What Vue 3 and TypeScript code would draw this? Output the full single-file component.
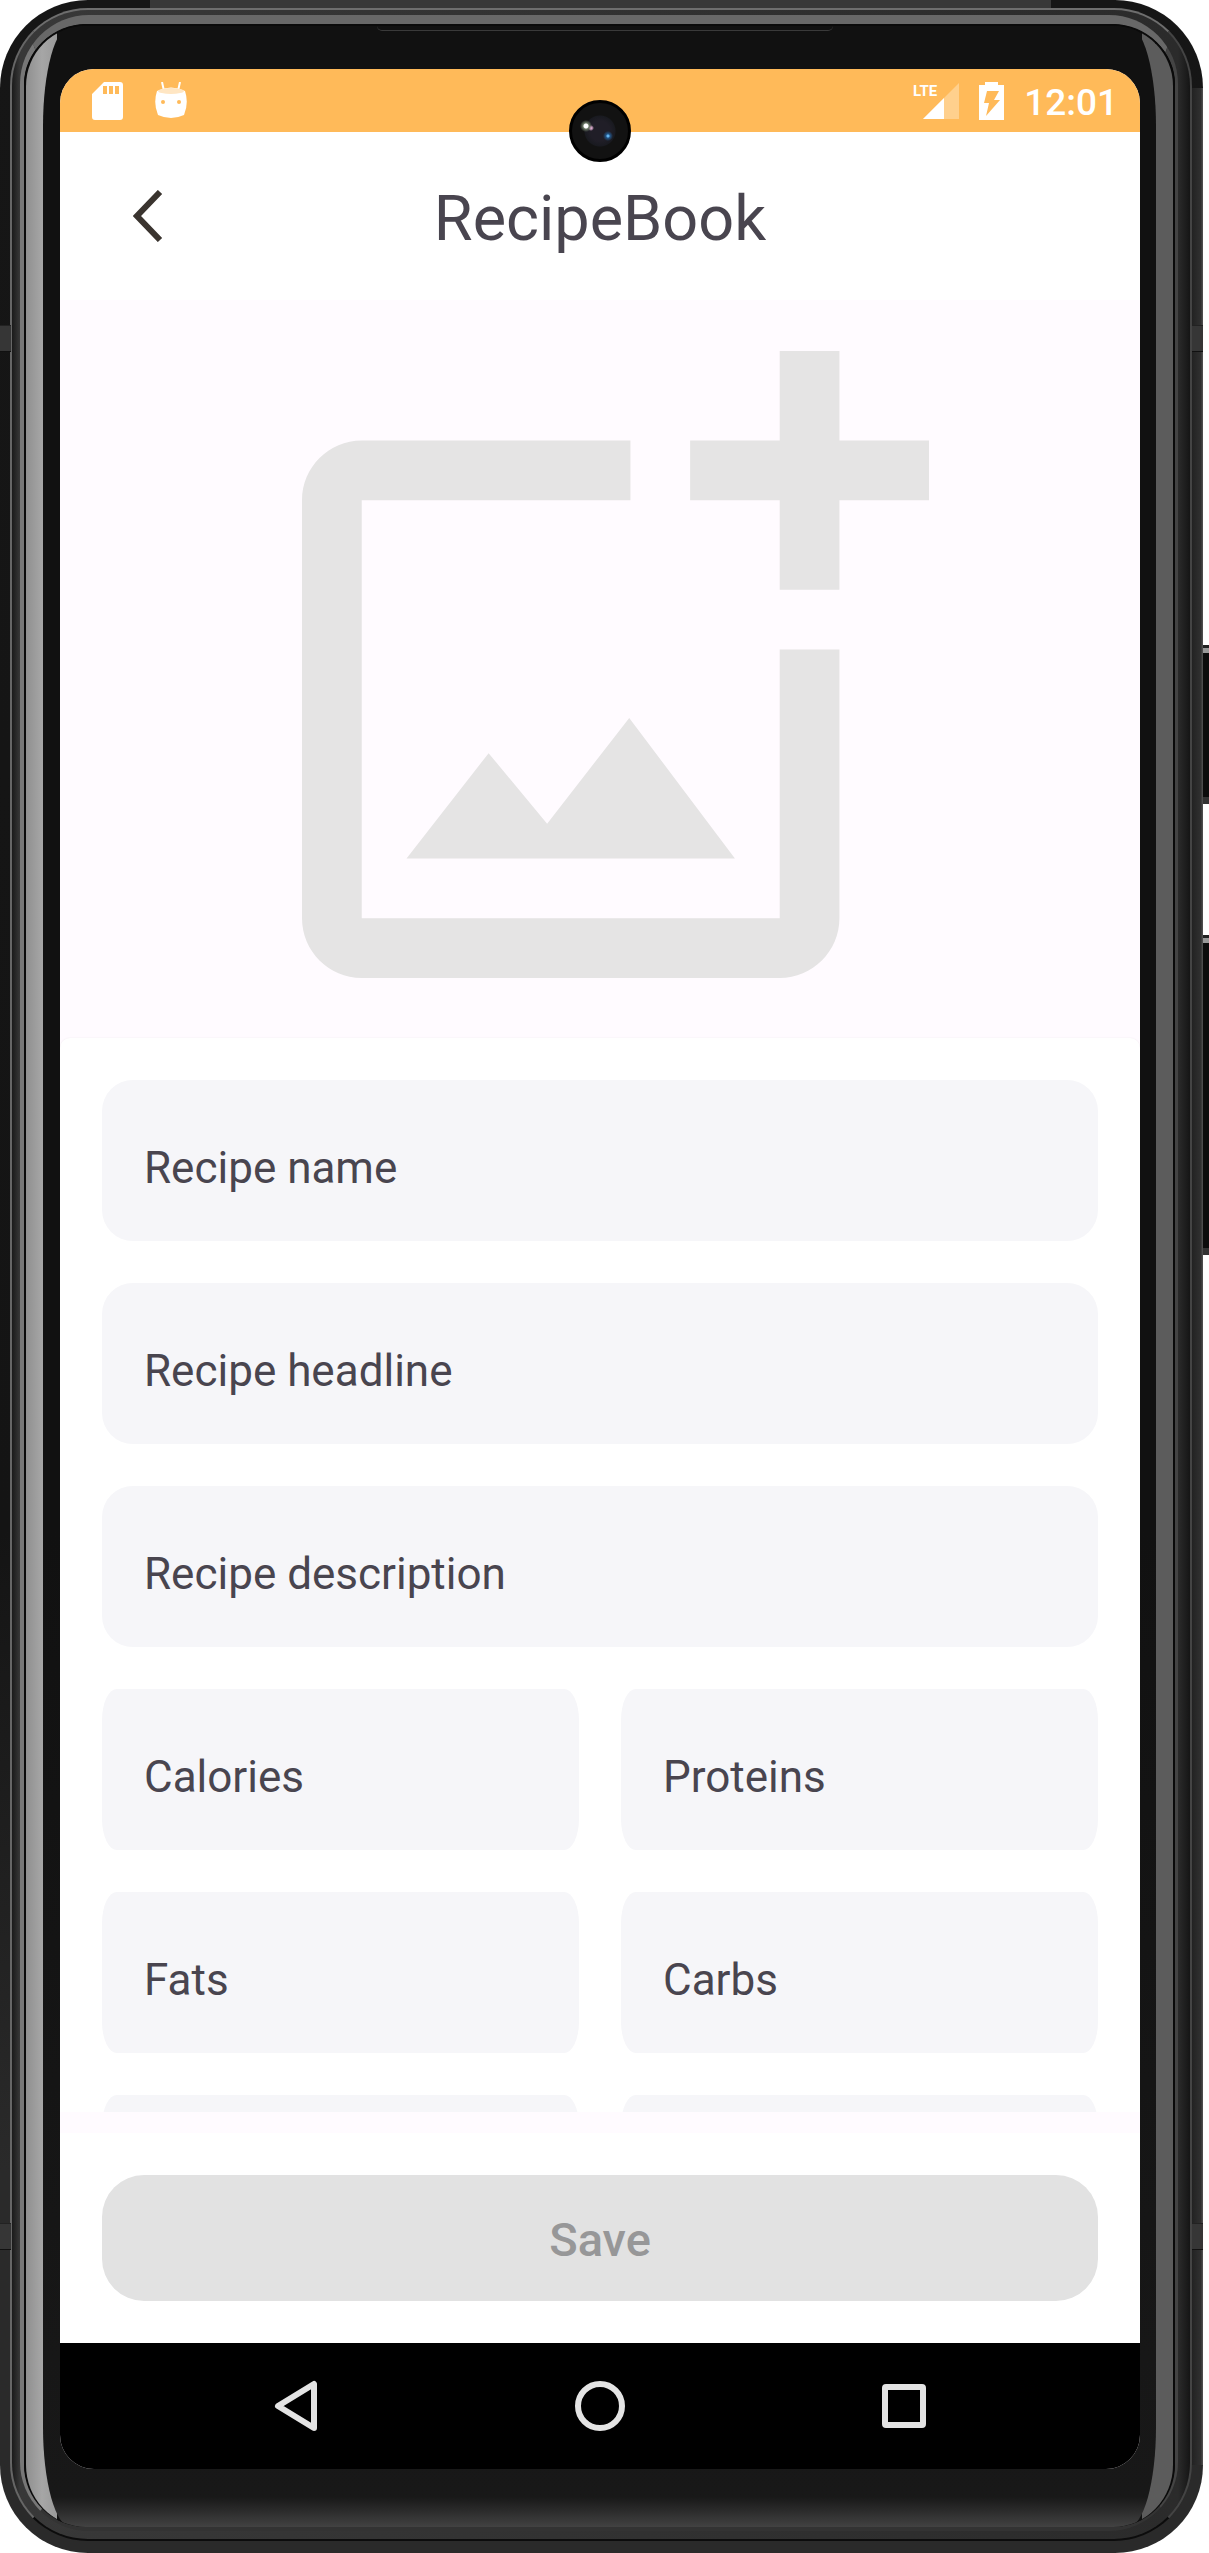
<script setup lang="ts">
import { reactive } from 'vue'

interface Field {
  key: string
  label: string
}

const wideFields: Field[] = [
  { key: 'name', label: 'Recipe name' },
  { key: 'headline', label: 'Recipe headline' },
  { key: 'description', label: 'Recipe description' },
]

const nutritionFields: Field[] = [
  { key: 'calories', label: 'Calories' },
  { key: 'proteins', label: 'Proteins' },
  { key: 'fats', label: 'Fats' },
  { key: 'carbs', label: 'Carbs' },
]

const extraFields: Field[] = [
  { key: 'time', label: 'Time' },
  { key: 'portions', label: 'Portions' },
]

const values = reactive<Record<string, string>>({})
</script>

<template>
  <div class="device">
    <span class="side-key power" aria-hidden="true"></span>
    <span class="side-key volume" aria-hidden="true"></span>
    <div class="case">
      <span class="band upper left"></span>
      <span class="band upper right"></span>
      <span class="band lower left"></span>
      <span class="band lower right"></span>
      <div class="rim">
        <div class="edge">
          <div class="glass">
            <div class="bezel">
              <span class="earpiece"></span>
              <div class="screen">
                <div class="status-bar">
                  <div class="status-group notices">
                    <svg class="sd" viewBox="0 0 31 38" aria-hidden="true">
                      <path fill="#fff" fill-rule="evenodd" d="M12 0H28a3 3 0 0 1 3 3V35a3 3 0 0 1-3 3H3a3 3 0 0 1-3-3V12ZM11 4V12H15V4ZM17 4V12H21V4ZM23 4V12H27V4Z" />
                    </svg>
                    <svg class="droid" viewBox="0 0 32 38" aria-hidden="true">
                      <path d="M7 0 9 9M25 0 23 9" stroke="#fff" stroke-width="2" />
                      <path fill="#fff" d="M2 9Q16 2 30 9Q34 21 29 33Q16 39 3 33Q-2 21 2 9Z" />
                      <ellipse cx="16" cy="9" rx="13" ry="3" fill="#ffe6c3" />
                      <circle cx="8" cy="20" r="2" fill="#ffba59" />
                      <circle cx="24" cy="20" r="2" fill="#ffba59" />
                    </svg>
                  </div>
                  <div class="status-group">
                    <svg class="signal" viewBox="0 0 46 38" aria-hidden="true">
                      <path fill="#ffd08d" d="M46 1V37H10Z" />
                      <path fill="#fff" d="M31 16V37H10Z" />
                      <text class="lte" x="0" y="14">LTE</text>
                    </svg>
                    <svg class="battery" viewBox="0 0 25 38" aria-hidden="true">
                      <path fill="#fff" d="M6 0H19V3H25V38H0V3H6Z" />
                      <path fill="#ffba59" d="M8 9H20L15 18H21L7 34L10 21H5Z" />
                    </svg>
                    <span class="clock">12:01</span>
                  </div>
                </div>
                <span class="camera" aria-hidden="true"></span>

                <header class="toolbar">
                  <button class="back" type="button" aria-label="Back">
                    <svg viewBox="0 0 30 52" aria-hidden="true">
                      <path d="M27 2 4 26 27 50" fill="none" stroke="#3a342f" stroke-width="6" />
                    </svg>
                  </button>
                  <h1>RecipeBook</h1>
                </header>

                <main class="content">
                  <button class="photo" type="button" aria-label="Add photo">
                    <svg viewBox="0 0 21 21" aria-hidden="true">
                      <path d="M11 3H2C.9 3 0 3.900 0 5V19C0 20.100.9 21 2 21H16C17.100 21 18 20.100 18 19V10H16V19H2V5H11Z" />
                      <path d="M16 0H18V3H21V5H18V8H16V5H13V3H16Z" />
                      <path d="M3.500 17 6.250 13.470 8.210 15.830 10.960 12.290 14.500 17Z" />
                    </svg>
                  </button>
                  <form id="recipe" class="sheet">
                    <label v-for="f in wideFields" :key="f.key" class="field">
                      <span>{{ f.label }}</span>
                      <input v-model="values[f.key]" type="text" />
                    </label>
                    <div class="pairs">
                      <label v-for="f in nutritionFields" :key="f.key" class="field half">
                        <span>{{ f.label }}</span>
                        <input v-model="values[f.key]" type="text" inputmode="numeric" />
                      </label>
                      <div v-for="f in extraFields" :key="f.key" class="field half">
                        <input v-model="values[f.key]" type="text" :aria-label="f.label" />
                      </div>
                    </div>
                  </form>
                </main>

                <footer class="actions">
                  <button class="save" type="submit" form="recipe" disabled>Save</button>
                </footer>

                <nav class="system-nav">
                  <button type="button" aria-label="System back">
                    <svg viewBox="0 0 60 60" aria-hidden="true"><path d="M48 8V52L12 30Z" /></svg>
                  </button>
                  <button type="button" aria-label="Home">
                    <svg viewBox="0 0 60 60" aria-hidden="true"><circle cx="30" cy="30" r="22" /></svg>
                  </button>
                  <button type="button" aria-label="Overview">
                    <svg viewBox="0 0 60 60" aria-hidden="true"><rect x="11" y="11" width="38" height="38" rx="1" /></svg>
                  </button>
                </nav>
              </div>
            </div>
          </div>
        </div>
      </div>
    </div>
  </div>
</template>

<style>
body {
  margin: 0;
  background: #fff;
}
</style>

<style scoped>
.device,
.device * {
  box-sizing: border-box;
}

.device {
  position: relative;
  height: 100vh;
  padding-right: 6px;
  font-family: Roboto, "Liberation Sans", sans-serif;
  color: #49454f;
}

button {
  padding: 0;
  border: 0;
  background: none;
  font: inherit;
}

svg {
  display: block;
}

/* Phone hardware */
.side-key {
  position: absolute;
  right: 0;
  width: 8px;
  background: linear-gradient(#222 0 3px, #999 3px 8px, #0c0c0c 8px calc(100% - 7px), #333 calc(100% - 7px));
}

.power {
  top: 645px;
  height: 159px;
}

.volume {
  top: 935px;
  height: 320px;
}

.case {
  position: relative;
  height: 100%;
  padding: 8px 11px 12px 10px;
  border-radius: 88px;
  background:
    linear-gradient(90deg, transparent 150px, #383838 150px calc(100% - 152px), transparent calc(100% - 152px)) top / 100% 8px no-repeat,
    linear-gradient(#161616, #141414 60%, #2a2a2a 85%, #2a2a2a);
}

.case::after {
  content: "";
  position: absolute;
  top: 88px;
  right: 0;
  bottom: 88px;
  width: 11px;
  background: linear-gradient(90deg, #222, #303030 80%, #555);
}

.band {
  position: absolute;
  z-index: 1;
  width: 11px;
  height: 27px;
  background: #363636;
  border-top: 1px solid #222;
  border-bottom: 1px solid #111;
}

.upper {
  top: 325px;
}

.lower {
  bottom: 303px;
}

.left {
  left: 0;
}

.right {
  right: 0;
}

.rim {
  height: 100%;
  padding: 5px 12px 8px 8px;
  border: 2px solid;
  border-color: #6e6e6e #444 #0c0c0c #666;
  border-radius: 78px;
  background: linear-gradient(90deg, #1a1a1a, #383838 8px, #2b2b2b calc(100% - 12px), #151515);
}

.edge {
  height: 100%;
  border: 4px solid;
  border-width: 9px 3px 4px 4px;
  border-color: #686868 #444 #333 #777;
  border-radius: 69px;
  background: #080808;
}

.glass {
  height: 100%;
  overflow: hidden;
  border: 2px solid #0a0a0a;
  border-bottom: 0;
  border-radius: 62px;
  background: linear-gradient(90deg, #8f8f8f, #a6a6a6 16px, #9a9a9a 31px, #111 31px calc(100% - 31px), #5c5c5c calc(100% - 31px));
}

.bezel {
  position: relative;
  height: 100%;
  margin: 0 17px;
  padding: 43px 16px 58px 17px;
  border-radius: 28px / 100px;
  background: linear-gradient(#111 0 60%, #181818 calc(100% - 30px), #424242);
}

.earpiece {
  position: absolute;
  top: 0;
  left: 30%;
  right: 29%;
  height: 5px;
  border-bottom: 1px solid #3a3a3a;
  border-radius: 0 0 6px 6px;
}

.screen {
  position: relative;
  display: flex;
  flex-direction: column;
  height: 100%;
  overflow: hidden;
  border-radius: 34px;
  background: #fffbff;
}

.camera {
  position: absolute;
  top: 31px;
  left: calc(50% - 31px);
  width: 62px;
  height: 62px;
  border: 3px solid #000;
  border-radius: 50%;
  background:
    radial-gradient(circle at 14px 23px, #fff 0 2px, #6d7b68 3px, transparent 6px),
    radial-gradient(circle at 19px 25px, #d9a6cc 0 1px, transparent 3px),
    radial-gradient(circle at 36px 33px, #65b5ef 0 1px, #23578a 2px, transparent 5px),
    radial-gradient(circle at 28px 28px, #201e27 0 10px, #191a20 15px, #121212 16px);
}

/* Status bar */
.status-bar {
  display: flex;
  flex: none;
  align-items: center;
  justify-content: space-between;
  height: 63px;
  padding: 0 22px 0 32px;
  background: #ffba59;
}

.status-group {
  display: flex;
  align-items: center;
  gap: 20px;
}

.notices {
  gap: 32px;
}

.sd {
  width: 31px;
  height: 38px;
}

.droid {
  width: 32px;
  height: 38px;
}

.signal {
  width: 46px;
  height: 38px;
}

.battery {
  width: 25px;
  height: 38px;
}

.lte {
  fill: #fff;
  font: 700 15px "Liberation Sans Narrow", Roboto, sans-serif;
}

.clock {
  padding-top: 4px;
  color: #fff;
  font-size: 37px;
  font-weight: 500;
  line-height: 40px;
}

/* App bar */
.toolbar {
  display: grid;
  grid-template-columns: 92px 1fr 92px;
  flex: none;
  align-items: center;
  height: 168px;
  padding: 0 42px;
  background: #fff;
}

.back {
  display: flex;
  align-items: center;
  justify-content: center;
  height: 84px;
}

.back svg {
  width: 30px;
  height: 52px;
}

h1 {
  margin: 0;
  padding-top: 6px;
  font-size: 63px;
  font-weight: 400;
  line-height: 84px;
  text-align: center;
}

/* Scrolling content */
.content {
  flex: 1 1 0;
  min-height: 0;
  overflow-y: auto;
  scrollbar-width: none;
}

.photo {
  display: flex;
  justify-content: center;
  width: 100%;
  padding: 51px 0 60px 30px;
}

.photo svg {
  width: 627px;
  height: 627px;
  fill: #e5e4e4;
}

.sheet {
  display: flex;
  flex-direction: column;
  gap: 42px;
  padding: 42px;
  border-radius: 10px 10px 0 0;
  background: #fff;
  box-shadow: 0 0 2px #f0ebef;
}

.pairs {
  display: grid;
  grid-template-columns: 1fr 1fr;
  gap: 42px;
}

.field {
  display: grid;
  align-items: center;
  height: 161px;
  border-radius: 31px;
  background: #f6f6f9;
  font-size: 44px;
  line-height: 60px;
}

.half {
  border-radius: 15px / 31px;
}

.field span,
.field input {
  grid-area: 1 / 1;
}

.field span {
  padding: 14px 42px 0;
}

.field input {
  width: 100%;
  height: 100%;
  padding: 14px 42px 0;
  border: 0;
  background: none;
  color: inherit;
  font: inherit;
}

/* Bottom action */
.actions {
  flex: none;
  margin-top: 21px;
  padding: 42px;
  background: #fff;
}

.save {
  display: block;
  width: 100%;
  height: 126px;
  padding-top: 2px;
  border-radius: 42px;
  background: #e2e2e2;
  color: #979798;
  font-size: 47px;
  font-weight: 500;
}

/* System navigation */
.system-nav {
  display: flex;
  flex: none;
  align-items: center;
  justify-content: center;
  gap: 244px;
  height: 126px;
  background: #000;
}

.system-nav svg {
  width: 60px;
  height: 60px;
  fill: none;
  stroke: #e4e4e4;
  stroke-width: 6px;
  stroke-linejoin: round;
}
</style>
